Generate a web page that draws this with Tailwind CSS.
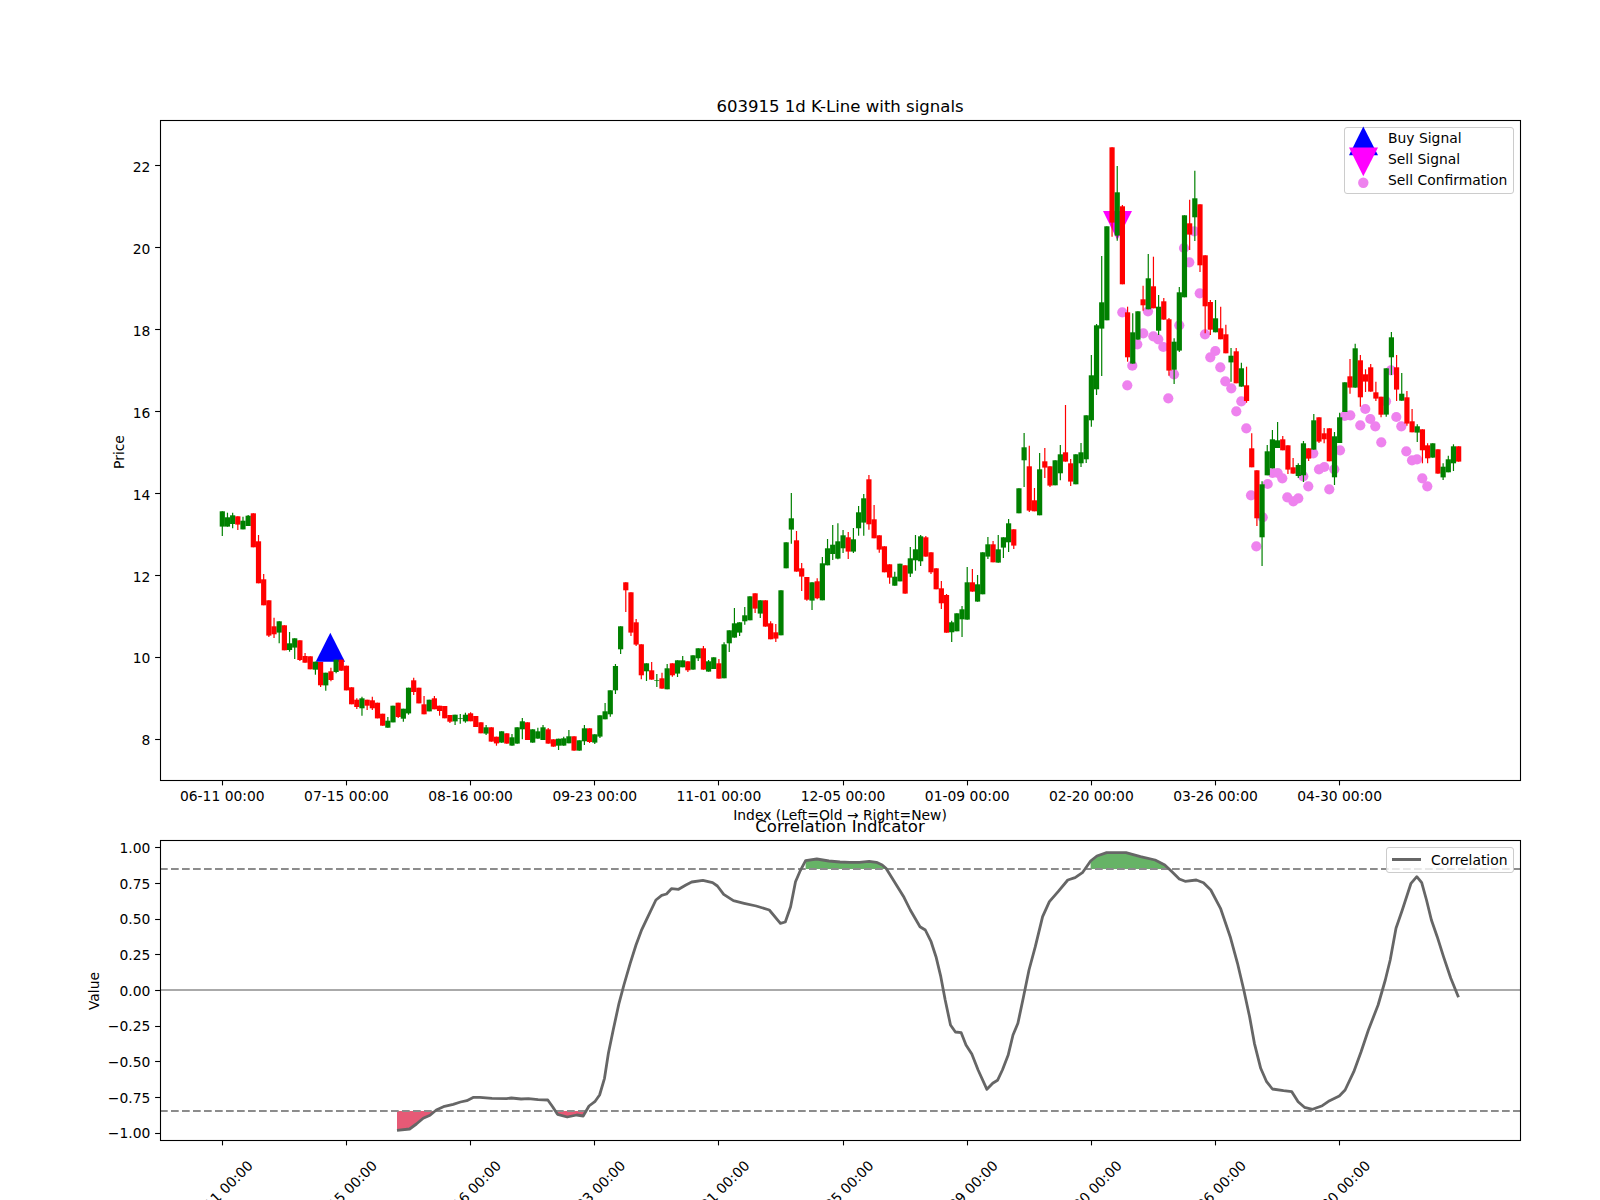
<!doctype html>
<html lang="en">
<head>
<meta charset="utf-8">
<title>603915 1d K-Line with signals</title>
<script src="https://cdn.jsdelivr.net/npm/@tailwindcss/browser@4"></script>
</head>
<body class="bg-white">
<div class="flex h-[1200px] w-[1600px] flex-col overflow-hidden bg-white pl-[160px] pt-[95px] font-['DejaVu_Sans',sans-serif] text-[13.89px] text-black">
  <h1 class="h-[25px] w-[1360px] text-center text-[16.55px] font-normal leading-[24px]">603915 1d K-Line with signals</h1>
  <section class="relative h-[660px] w-[1360px]">
    <svg id="top" class="block overflow-visible" width="1360" height="660" viewBox="160 120 1360 660"></svg>
    <div class="absolute right-[6px] top-[7px] h-[67px] w-[170px] rounded-[3px] border border-[#cccccc] bg-white/80 pl-[43px] leading-[21px]">
      <div>Buy Signal</div>
      <div>Sell Signal</div>
      <div>Sell Confirmation</div>
      <svg class="absolute left-0 top-0 overflow-visible" width="40" height="66" viewBox="1345 127.5 40 66">
        <polygon points="1363.3,126 1349,154.7 1378,154.7" fill="#0000ff"/>
        <polygon points="1349,147 1378,147 1363.3,175.7" fill="#ff00ff"/>
        <circle cx="1363.3" cy="182.3" r="5.2" fill="#ee82ee"/>
      </svg>
    </div>
  </section>
  <p class="mt-[27px] h-[16px] w-[1360px] text-center leading-[16px]">Index (Left=Old → Right=New)</p>
  <h2 class="-mt-[8px] h-[25px] w-[1360px] text-center text-[16.55px] font-normal leading-[24px]">Correlation Indicator</h2>
  <section class="relative h-[300px] w-[1360px]">
    <svg id="low" class="block overflow-visible" width="1360" height="300" viewBox="160 840 1360 300"></svg>
    <div class="absolute right-[6px] top-[7px] flex h-[26px] w-[128px] items-center rounded-[3px] border border-[#cccccc] bg-white/80 pb-[1px] pl-[5px]">
      <span class="h-[3px] w-[29px] bg-[#666666]"></span>
      <span class="ml-[10px] leading-[16px]">Correlation</span>
    </div>
  </section>
</div>
<script>
const R='#ff0000',G='#008000';
const X=i=>222.3+5.173*i;
const candles=[];
function seg(off,list){list.forEach(a=>{const[c,t,b,wt,wb]=a;candles.push({c:c?G:R,t:off+t/3,b:off+b/3,wt:off+(wt===undefined||wt===null?t:wt)/3,wb:off+(wb===undefined?b:wb)/3});});}
seg(480,[
[1,94,140,94,168],[1,112,140,98],[1,106,132,98,145],[0,109,134,109,150],[1,122,148,110],[1,107,138,105],[0,100,202],[0,184,310,165],[0,298,376,282],[0,361,467,361,471],
[0,439,463,413,474],[1,424,458,424,490],[0,436,511],[1,490,510,456,515],[1,475,503,475,537],[0,481,540,481,543],[0,528,548,519],[0,529,568],[1,545,569,545,584],[0,546,616,546,621],
[1,578,616,578,632],[0,574,600,563,604],[1,539,576,539,580],[0,539,572],[0,557,631],[0,622,673],[0,659,681,655,687],[1,655,685,650,707],[0,659,677,659,690],[0,661,685,650,690],
[0,668,715],[0,701,737],[1,722,743,711],[1,677,727],[0,668,711,668,714],[1,686,716,686,725],[1,623,700,623,704],[0,601,636,593,645],[0,623,670],[0,673,703,648],
[1,659,694],[0,655,688,648],[0,677,693,677,707],[0,678,715],[0,705,725,705,729],[1,704,724,704,735],[1,714,716,702,731],[1,704,724,698,728],[0,700,724,697],[0,708,741]
]);
seg(480,[
[0,727,760],[1,742,761,735,765],[0,742,785],[0,770,790,770,797],[1,754,788],[0,760,791],[1,772,797,762],[1,742,791],[1,724,748,714,778],[0,727,780],
[1,748,788],[1,754,776,743],[1,742,780,735],[0,748,791,744],[0,778,800],[1,776,797,776,810],[1,775,797,770],[1,769,790,750],[0,769,812],[1,781,812],
[1,745,784,735,795],[0,745,786,745,789],[1,763,788,763,792],[1,706,770,706,774],[1,694,718,669],[1,631,703,631,710],[1,558,631,552,642],[1,439,508,439,522],[0,307,331,307,396],[0,337,458,337,468],
[0,427,494,417,498],[0,493,586,493,598],[1,550,574,550,603],[0,571,599,546],[1,600,602,582,621],[0,595,626,578],[1,565,628,552],[0,550,586,550,590],[1,541,581,541,591],[1,541,562,528],
[0,544,571,544,576],[1,526,569],[1,505,535,505,543],[0,505,569,498],[1,544,575,540],[1,532,567],[0,550,596,537],[1,493,595,487],[1,451,490,451,516],[1,430,473,384],
[1,427,458,427,468],[1,406,424,381,434],[1,349,421],[0,340,386,340,399],[1,361,401,361,414],[0,361,440]
]);
seg(380,[
[0,730,778,724],[0,757,776,732,786],[1,631,766],[1,487,565],[1,415,449,339,491],[0,481,575,453],[0,565,590,549,633],[0,591,659,591,662],[1,607,662,607,690],[0,604,655,595,658],
[1,550,661,531],[1,505,556,477],[1,494,522,435,540],[1,484,536,430,538],[1,466,505,450,519],[0,472,515,456,537],[1,478,515,444,519],[1,397,445,378,467],[1,355,428,342,467],[0,298,433,285,449],
[0,418,475,375],[0,466,509,466,518],[0,499,577],[0,553,593,553,611],[1,590,617,575],[1,551,604],[0,556,641],[1,535,581,501,591],[1,508,541,465,572],[1,469,544,465,558],
[0,472,530,468],[0,517,577,517,582],[0,565,628],[0,625,670,603,687],[0,645,758,642],[1,727,757,722,786],[1,700,754],[1,688,718,678,771],[1,607,719,561],[0,607,635,567],
[1,613,665,585],[1,517,643],[1,493,530,471,537],[0,493,547,483],[1,508,548,465],[1,472,503,472,534],[1,430,487,417,516],[0,448,497,448,507],[1,325,400],[1,202,241,159,321],
[0,259,392,197,396],[0,361,394,324],[1,268,406,219],[0,244,263,204,294],[0,259,317,259,321],[1,241,316],[1,223,280,195,301],[0,217,245,75],[0,250,305,237,318],[1,223,313],
[1,217,250,189,261],[1,106,238,106,249]
]);
seg(120,[
[1,766,901,705,920],[1,616,808,612,825],[1,547,626,408,768],[1,319,601],[0,82,308,82,350],[1,217,347,138,362],[0,259,493,255],[0,577,712,560,725],[1,637,731,580],[1,574,659],
[0,538,556,497,572],[1,475,568,402],[0,499,565,410],[1,560,632,525,645],[0,544,599,534],[0,598,752,594,767],[1,665,749,655,792],[1,517,692,501,696],[1,286,532],[0,310,344,239,390],
[1,235,292,152,363],[0,253,436,253,456],[0,406,559,406,640],[0,546,629,540,645],[1,595,637,540],[0,625,658,560],[0,643,700,614],[1,707,727,684,785],[0,694,790,684],[1,745,800,728]
]);
seg(300,[
[0,256,303,200,308],[0,445,502,400],[0,511,655,511,678],[1,553,712,544,798],[1,454,526,435],[1,418,505,390],[1,421,444,366],[0,418,451,408],[0,436,509,436,522],[0,502,521,474],
[1,495,528,490,534],[1,430,526,423,546],[0,445,476,445,483],[1,361,449,342],[0,352,425,352,429],[0,400,418,384,430],[0,385,484],[1,409,532,396,555],[1,352,429,338],[1,247,336],
[0,229,263,177,281],[1,145,263,131],[0,181,292,165,320],[0,223,245,208,276],[0,202,275,192],[0,277,296,245,303],[0,290,344,290,352],[1,205,344,205,350],[1,112,172,96,225],[0,202,269,165,303],
[1,281,302,219],[0,292,371,273,377],[0,364,397,327],[1,379,398,373,426],[0,388,451,388,490],[0,436,475,430,490],[1,430,473],[0,448,521],[1,500,532,490,540],[1,478,517,467],
[1,439,490,433,513],[0,439,485]
]);
const dots=[];
[[187,577],[264,574],[202,796],[217,737],[232,673],[250,640],[280,649],[295,658],[310,681],[325,835],[342,763],[358,616],[372,384],[388,427],[403,334],[419,520],[435,643],[451,712],[466,693],[481,742],[496,784],[514,805],[529,874],[544,844]].forEach(p=>dots.push([1060+p[0]/3,120+p[1]/3]));
[[199,385],[213,586],[229,739],[248,652],[263,552],[278,519],[293,519],[307,535],[322,592],[340,604],[355,595],[370,529],[385,559],[400,460],[417,508],[433,501],[448,568],[463,508],[480,451],[494,348],[511,346],[541,376],[556,327],[571,357],[586,379],[604,427],[618,304],[633,211],[649,351],[664,379],[679,454],[696,481],[711,478],[727,535],[742,559]].forEach(p=>dots.push([1180+p[0]/3,300+p[1]/3]));
const xt=['06-11 00:00','07-15 00:00','08-16 00:00','09-23 00:00','11-01 00:00','12-05 00:00','01-09 00:00','02-20 00:00','03-26 00:00','04-30 00:00'];
const txt=(x,y,s,a,extra)=>`<text x="${x}" y="${y}" font-size="13.89" text-anchor="${a}" dominant-baseline="central" fill="#000" ${extra||''}>${s}</text>`;
const tickX=(x,y)=>`<line x1="${x}" x2="${x}" y1="${y}" y2="${y+5.4}" stroke="#000" stroke-width="1.1"/>`;
const tickY=(y)=>`<line x1="155.1" x2="160" y1="${y}" y2="${y}" stroke="#000" stroke-width="1.1"/>`;
let h='<polygon points="330.3,632.7 315.7,661.7 345,661.7" fill="#0000ff"/><polygon points="1103,211 1132,211 1117.3,240" fill="#ff00ff"/>';
dots.forEach(d=>h+=`<circle cx="${d[0].toFixed(1)}" cy="${d[1].toFixed(1)}" r="5.1" fill="#ee82ee"/>`);
candles.forEach((c,i)=>{const x=X(i).toFixed(2);
  h+=`<line x1="${x}" x2="${x}" y1="${c.wt.toFixed(1)}" y2="${c.wb.toFixed(1)}" stroke="${c.c}" stroke-width="1.2"/>`;
  h+=`<rect x="${(X(i)-2.6).toFixed(2)}" y="${c.t.toFixed(1)}" width="5.2" height="${(c.b-c.t).toFixed(1)}" fill="${c.c}"/>`;});
for(let k=0;k<10;k++){const x=Math.floor(X(24*k))+.5;h+=tickX(x,780)+txt(X(24*k),796,xt[k],'middle');}
for(let v=8;v<=22;v+=2){const y=739.3-(v-8)*40.95;h+=tickY(Math.floor(y)+.5)+txt(150.3,y+1,v,'end');}
h+=txt(119,452,'Price','middle','transform="rotate(-90 119 452)"');
h+='<rect x="160.5" y="120.5" width="1360" height="660" fill="none" stroke="#000" stroke-width="1.1"/>';
document.getElementById('top').innerHTML=h;

const P7=[[654,991],[680,987],[694,972],[708,955],[722,946],[735,930],[752,919],[770,913],[785,906],[798,902],[812,892],[825,892],[850,895],[880,896],[890,894],[910,897],[925,896],[945,899],[965,900],[975,920],[985,943],[1005,951],[1025,945],[1038,948],[1050,918],[1062,905],[1072,885],[1082,835],[1090,760],[1100,690],[1112,610],[1122,555],[1135,490],[1147,435],[1158,392],[1170,355],[1188,300],[1200,286],[1210,282],[1220,266],[1235,268],[1250,255],[1262,246],[1285,241],[1305,248],[1315,258],[1328,283],[1348,302],[1370,310],[1395,318],[1422,330],[1445,370],[1455,366],[1466,320],[1476,245],[1485,215],[1497,182],[1520,177],[1545,183]];
const P8=[[0,186],[20,187],[40,187],[60,184],[75,187],[87,195],[95,205],[110,240],[132,292],[145,330],[165,380],[176,390],[188,425],[198,470],[208,530],[217,600],[228,675],[238,696],[250,698],[260,735],[272,762],[285,810],[303,868],[315,850],[325,841],[335,810],[347,765],[357,705],[367,670],[378,595],[390,510],[403,440],[418,350],[432,305],[450,275],[470,240],[485,233],[500,218],[517,183],[530,168],[550,158],[590,158],[620,170],[650,180],[670,195],[685,215],[700,237],[712,244],[735,240],[750,248],[765,270],[785,325],[805,410],[820,490],[833,570],[845,650],[855,730],[868,805],[880,845],[892,867],[915,872],[932,875],[945,905],[958,922],[975,928],[995,917],[1010,902],[1030,888],[1042,870],[1060,815],[1075,755],[1090,690],[1110,615],[1125,540],[1135,480],[1147,385],[1160,330],[1178,250],[1190,230],[1200,248],[1210,300],[1220,360],[1232,410],[1245,470],[1260,535],[1276,592]];
const a7=p=>[80+p[0]/2.063,800+p[1]/3],a8=p=>[840+p[0]/2.063,800+p[1]/3];
const s=a=>a.map(p=>p[0].toFixed(1)+','+p[1].toFixed(1)).join(' ');
const line=[...P7.map(a7),...P8.map(a8)];
const TH=800+933/3,TL=800+207/3;
const poly=(pts,fill,op)=>`<polygon points="${s(pts)}" fill="${fill}" fill-opacity="${op}"/>`;
let l='';
l+=poly([[654,933],[654,991],[680,987],[694,972],[708,955],[722,946],[732,933]].map(a7),'#dc143c',.7);
l+=poly([[980,933],[985,943],[1005,951],[1025,945],[1038,948],[1043,933]].map(a7),'#dc143c',.7);
l+=poly([[1497,207],[1497,182],[1520,177],[1545,183]].map(a7).concat([[0,186],[20,187],[40,187],[60,184],[75,187],[87,195],[94,207]].map(a8)),'#008000',.6);
l+=poly([[517,207],[517,183],[530,168],[550,158],[590,158],[620,170],[650,180],[670,195],[680,207]].map(a8),'#008000',.6);
l+=`<line x1="160" x2="1520" y1="990" y2="990" stroke="#aaaaaa" stroke-width="2"/>`;
[TL,TH].forEach(y=>l+=`<line x1="160" x2="1520" y1="${y}" y2="${y}" stroke="#8c8c8c" stroke-width="2" stroke-dasharray="7.7 3.3"/>`);
l+=`<polyline points="${s(line)}" fill="none" stroke="#666666" stroke-width="2.8" stroke-linejoin="round"/>`;
for(let k=0;k<10;k++){const x=X(24*k)-2;l+=tickX(Math.floor(X(24*k))+.5,1140);l+=txt(x,1193,xt[k],'middle',`transform="rotate(-45 ${x} 1193)"`);}
[1,.75,.5,.25,0,-.25,-.5,-.75,-1].forEach(v=>{const y=990.6-142.65*v;l+=tickY(Math.floor(y)+.5)+txt(150.3,y,(v<0?'\u2212':'')+Math.abs(v).toFixed(2),'end');});
l+=txt(94,991,'Value','middle','transform="rotate(-90 94 991)"');
l+='<rect x="160.5" y="840.5" width="1360" height="300" fill="none" stroke="#000" stroke-width="1.1"/>';
document.getElementById('low').innerHTML=l;
</script>
</body>
</html>
